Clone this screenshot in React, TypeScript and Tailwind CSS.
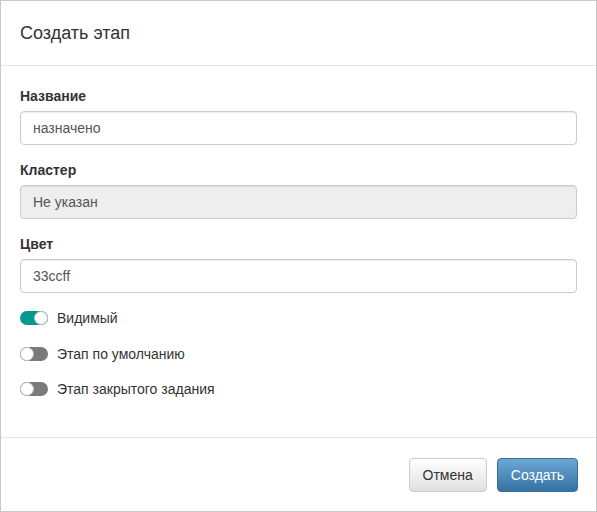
import React from 'react';

const inputClass =
  'w-full h-[34px] px-3 text-sm text-[#555] border border-[#ccc] rounded-[4px] shadow-[inset_0_1px_1px_rgba(0,0,0,0.075)] outline-none';

const Toggle: React.FC<{ on?: boolean; label: string }> = ({ on = false, label }) => (
  <div className="flex items-center h-5 gap-[9px]">
    <span
      className={`relative w-[28px] h-[14px] rounded-full ${on ? 'bg-[#009a8e]' : 'bg-[#7a7a7a]'}`}
    >
      <span
        className={`absolute top-0 w-[14px] h-[14px] rounded-full bg-white border border-[#bdbdbd] ${
          on ? 'right-0 border-[#009a8e]' : 'left-0'
        }`}
      />
    </span>
    <span className="text-sm text-[#333]">{label}</span>
  </div>
);

const App: React.FC = () => {
  return (
    <div
      className="w-[597px] h-[512px] bg-white border border-[#c8c8c8] flex flex-col"
      style={{ fontFamily: '"Liberation Sans", Arial, sans-serif' }}
    >
      <div className="px-[19px] pt-5 pb-5 border-b border-[#e5e5e5]">
        <h4 className="text-lg leading-[24px] text-[#333]">Создать этап</h4>
      </div>

      <div className="flex-1 px-[19px] pt-5">
        <div className="mb-[15px]">
          <label className="block text-sm font-bold leading-5 text-[#333] mb-[5px]">Название</label>
          <input className={inputClass} defaultValue="назначено" />
        </div>
        <div className="mb-[15px]">
          <label className="block text-sm font-bold leading-5 text-[#333] mb-[5px]">Кластер</label>
          <input className={`${inputClass} bg-[#eee]`} defaultValue="Не указан" disabled />
        </div>
        <div className="mb-[15px]">
          <label className="block text-sm font-bold leading-5 text-[#333] mb-[5px]">Цвет</label>
          <input className={inputClass} defaultValue="33ccff" />
        </div>
        <div className="flex flex-col gap-[15.5px]">
          <Toggle on label="Видимый" />
          <Toggle label="Этап по умолчанию" />
          <Toggle label="Этап закрытого задания" />
        </div>
      </div>

      <div className="border-t border-[#e5e5e5] pl-[19px] pr-[18px] pt-5 pb-[19px] flex justify-end gap-[10px]">
        <button
          type="button"
          className="h-[34px] px-[13px] text-sm text-[#333] rounded-[4px] border border-[#ccc] bg-gradient-to-b from-white to-[#e0e0e0]"
        >
          Отмена
        </button>
        <button
          type="button"
          className="h-[34px] px-[13px] text-sm text-white rounded-[4px] border border-[#3a6f99] bg-gradient-to-b from-[#6ca8d6] to-[#3472a3]"
        >
          Создать
        </button>
      </div>
    </div>
  );
};

export default App;
